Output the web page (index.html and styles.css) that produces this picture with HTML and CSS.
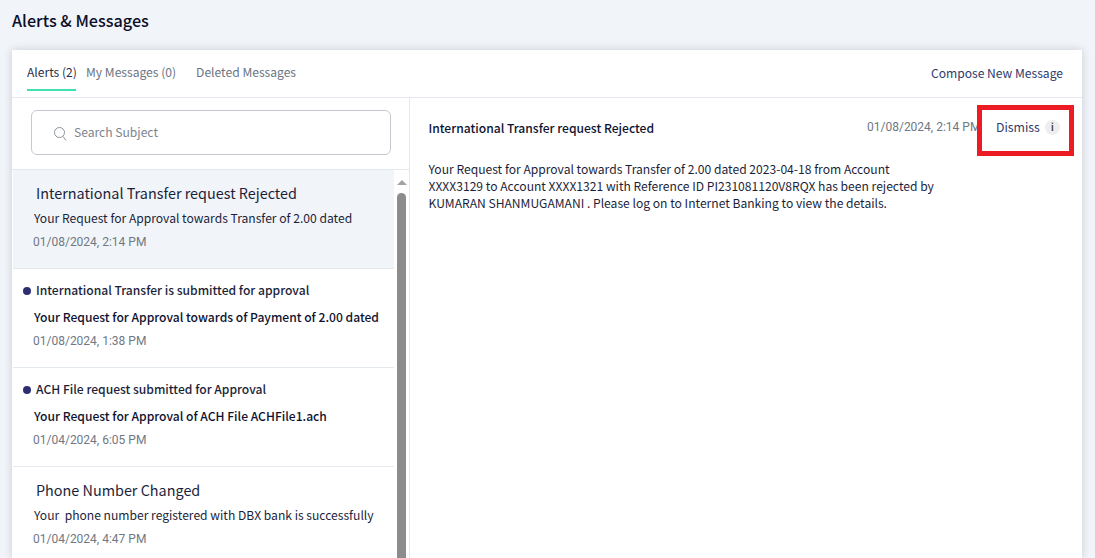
FILE: index.html
```html
<!DOCTYPE html>
<html lang="en">
<head>
<meta charset="utf-8">
<title>Alerts &amp; Messages</title>
<link rel="stylesheet" href="styles.css">
</head>
<body>
<main class="page">
  <h1 class="title">Alerts &amp; Messages</h1>
  <section class="card">
    <header class="card-head">
      <nav class="tabs">
        <span class="tab tab-active">Alerts (2)</span>
        <span class="tab tab-my">My Messages (0)</span>
        <span class="tab tab-del">Deleted Messages</span>
      </nav>
      <a class="compose">Compose New Message</a>
    </header>
    <div class="card-body">
      <aside class="side">
        <div class="search-wrap">
          <div class="search">
            <svg class="search-icon" width="14" height="16" viewBox="0 0 14 16" fill="none" stroke="#8b939c" stroke-width="1"><circle cx="6.5" cy="6.5" r="5"/><path d="M10 10.5l3 4"/></svg>
            <span class="search-text">Search Subject</span>
          </div>
        </div>
        <div class="list-wrap">
          <ul class="list">
            <li class="item item-selected">
              <div class="subject">International Transfer request Rejected</div>
              <div class="snippet">Your Request for Approval towards Transfer of 2.00 dated</div>
              <div class="date">01/08/2024, 2:14 PM</div>
            </li>
            <li class="item item-unread">
              <div class="subject"><i class="dot"></i>International Transfer is submitted for approval</div>
              <div class="snippet">Your Request for Approval towards of Payment of 2.00 dated</div>
              <div class="date">01/08/2024, 1:38 PM</div>
            </li>
            <li class="item item-unread">
              <div class="subject"><i class="dot"></i>ACH File request submitted for Approval</div>
              <div class="snippet">Your Request for Approval of ACH File ACHFile1.ach</div>
              <div class="date">01/04/2024, 6:05 PM</div>
            </li>
            <li class="item">
              <div class="subject">Phone Number Changed</div>
              <div class="snippet">Your&nbsp; phone number registered with DBX bank is successfully</div>
              <div class="date">01/04/2024, 4:47 PM</div>
            </li>
          </ul>
          <div class="scrollbar">
            <span class="arrow"></span>
            <span class="thumb"></span>
          </div>
        </div>
      </aside>
      <article class="detail">
        <div class="detail-head">
          <h2 class="detail-subject">International Transfer request Rejected</h2>
          <span class="detail-date">01/08/2024, 2:14 PM</span>
          <div class="dismiss">
            <span>Dismiss</span>
            <span class="info">i</span>
          </div>
        </div>
        <p class="detail-text">Your Request for Approval towards Transfer of 2.00 dated 2023-04-18 from Account<br>XXXX3129 to Account XXXX1321 with Reference ID PI231081120V8RQX has been rejected by<br>KUMARAN SHANMUGAMANI . Please log on to Internet Banking to view the details.</p>
      </article>
    </div>
  </section>
</main>
</body>
</html>
```
FILE: styles.css
```css
*, *::before { box-sizing: border-box; }
html, body { margin: 0; height: 100%; overflow: hidden; }
body {
  background: #f1f4f8;
  font-family: "Noto Sans CJK SC", "Noto Sans", sans-serif;
  color: #1c1f3a;
}
.page { padding: 9px 13px 0 12px; height: 558px; display: flex; flex-direction: column; }
.title { margin: 0 0 19px; font-size: 16.2px; line-height: 22px; font-weight: 500; color: #0b0f2a; }
.card {
  flex: 1;
  background: #fff;
  box-shadow: 0 0 8px rgba(60, 70, 90, .22);
  display: flex;
  flex-direction: column;
  min-height: 0;
}
.card-head {
  height: 48px;
  flex: none;
  display: flex;
  justify-content: space-between;
  border-bottom: 1px solid #e4e8ef;
  padding: 0 19px 0 15px;
}
.tabs { display: flex; }
.tab { font-size: 12.1px; line-height: 19px; padding-top: 12px; color: #6b7482; height: 41px; white-space: nowrap; }
.tab-active { color: #2b2f4a; border-bottom: 2px solid #3ee0b4; width: 49px; }
.tab-my { margin-left: 10px; }
.tab-del { margin-left: 20px; }
.compose { font-size: 12.1px; line-height: 19px; padding-top: 13px; color: #2f3a6b; }
.card-body { flex: 1; display: flex; min-height: 0; }
.side { width: 398px; flex: none; border-right: 1px solid #e4e8ef; display: flex; flex-direction: column; }
.search-wrap { height: 72px; flex: none; padding: 12px 18px 0 19px; border-bottom: 1px solid #e4e8ef; }
.search {
  height: 45px;
  border: 1px solid #c4c9d0;
  border-radius: 6px;
  display: flex;
  align-items: center;
  padding-left: 21px;
  font-size: 12.1px;
  color: #7b838d;
}
.search-text { margin-top: -2px; }
.search-icon { margin-right: 7px; margin-top: 3px; }
.list-wrap { flex: 1; display: flex; min-height: 0; margin-left: 1px; }
.list { list-style: none; margin: 0; padding: 0; width: 381px; flex: none; }
.item { height: 99px; border-bottom: 1px solid #e4e8ef; padding: 11px 0 0 21px; position: relative; }
.item-selected { background: #f1f4f8; }
.subject { font-size: 14.4px; line-height: 24px; margin-left: 2px; color: #1c1f3a; }
.snippet { font-size: 12.1px; line-height: 19px; margin-top: 3px; color: #1c1f3a; white-space: nowrap; }
.date { font-family: "Roboto", sans-serif; font-size: 12px; line-height: 16px; margin-top: 7px; margin-left: -1px; color: #6f7883; }
.item-unread .subject { font-size: 12.1px; font-weight: 500; line-height: 19px; margin-top: 0; }
.item-unread .snippet { font-weight: 500; color: #0e1230; margin-top: 8px; }
.item-unread .date { margin-top: 7px; }
.dot {
  position: absolute;
  left: 10px;
  top: 18px;
  width: 8px;
  height: 8px;
  border-radius: 50%;
  background: #2c2d72;
}
.scrollbar { width: 9px; margin-left: 3px; flex: none; position: relative; display: flex; flex-direction: column; align-items: center; }
.arrow {
  width: 0;
  height: 0;
  margin-top: 10px;
  border-left: 5px solid transparent;
  border-right: 5px solid transparent;
  border-bottom: 5px solid #a3a3a3;
}
.thumb { width: 9px; flex: 1; margin-top: 8px; background: #8c8c8c; border-radius: 5px 5px 0 0; }
.detail { flex: 1; min-width: 0; padding: 18px 0 0 18.5px; }
.detail-head { display: flex; align-items: center; height: 22px; }
.detail-subject { margin: 0; font-size: 12.1px; line-height: 19px; font-weight: 500; color: #0e1230; width: 438.5px; }
.detail-date { font-size: 12px; font-family: "Roboto", sans-serif; color: #6f7883; width: 112px; white-space: nowrap; overflow: hidden; }
.dismiss { display: flex; align-items: center; margin-left: 17px; font-size: 12.3px; color: #2f3a6b; position: relative; }
.dismiss::before {
  content: "";
  position: absolute;
  left: -19px;
  top: -13px;
  width: 97px;
  height: 51px;
  border: 5px solid #ed1c24;
}
.info {
  width: 15px;
  height: 15px;
  margin-left: 5px;
  border-radius: 50%;
  background: #eeeeee;
  color: #444;
  font-size: 9px;
  font-weight: 700;
  line-height: 15px;
  text-align: center;
}
.detail-text { margin: 22px 0 0; font-size: 12.1px; line-height: 17px; color: #1c1f3a; white-space: nowrap; }
```
